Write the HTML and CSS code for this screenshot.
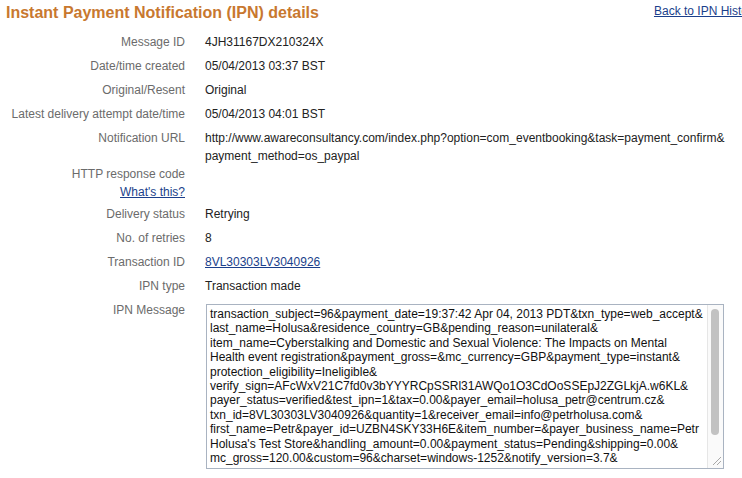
FILE: index.html
```html
<!DOCTYPE html>
<html lang="en">
<head>
    <meta charset="UTF-8">
    <title>Instant Payment Notification (IPN) details</title>
    <meta name="viewport" content="width=device-width, initial-scale=1.0">
    <link rel="stylesheet" href="styles.css">
</head>
<body>
    <div id="page">
        <header>
            <h1>Instant Payment Notification (IPN) details</h1>
            <a class="back" href="#">Back to IPN History</a>
        </header>
        <div id="details">
            <div class="label">Message ID</div>
            <div class="value">4JH31167DX210324X</div>

            <div class="label">Date/time created</div>
            <div class="value">05/04/2013 03:37 BST</div>

            <div class="label">Original/Resent</div>
            <div class="value">Original</div>

            <div class="label">Latest delivery attempt date/time</div>
            <div class="value">05/04/2013 04:01 BST</div>

            <div class="label url">Notification URL</div>
            <div class="value url">http://www.awareconsultancy.com/index.php?option=com_eventbooking&amp;task=payment_confirm&amp;<br>payment_method=os_paypal</div>

            <div class="label http">HTTP response code<br><a href="#">What's this?</a></div>
            <div class="value http"></div>

            <div class="label">Delivery status</div>
            <div class="value">Retrying</div>

            <div class="label">No. of retries</div>
            <div class="value">8</div>

            <div class="label">Transaction ID</div>
            <div class="value"><a href="#">8VL30303LV3040926</a></div>

            <div class="label">IPN type</div>
            <div class="value">Transaction made</div>

            <div class="label">IPN Message</div>
            <div class="value">
                <div class="msgbox">
<textarea id="message" readonly>transaction_subject=96&amp;payment_date=19:37:42 Apr 04, 2013 PDT&amp;txn_type=web_accept&amp;
last_name=Holusa&amp;residence_country=GB&amp;pending_reason=unilateral&amp;
item_name=Cyberstalking and Domestic and Sexual Violence: The Impacts on Mental
Health event registration&amp;payment_gross=&amp;mc_currency=GBP&amp;payment_type=instant&amp;
protection_eligibility=Ineligible&amp;
verify_sign=AFcWxV21C7fd0v3bYYYRCpSSRl31AWQo1O3CdOoSSEpJ2ZGLkjA.w6KL&amp;
payer_status=verified&amp;test_ipn=1&amp;tax=0.00&amp;payer_email=holusa_petr@centrum.cz&amp;
txn_id=8VL30303LV3040926&amp;quantity=1&amp;receiver_email=info@petrholusa.com&amp;
first_name=Petr&amp;payer_id=UZBN4SKY33H6E&amp;item_number=&amp;payer_business_name=Petr
Holusa's Test Store&amp;handling_amount=0.00&amp;payment_status=Pending&amp;shipping=0.00&amp;
mc_gross=120.00&amp;custom=96&amp;charset=windows-1252&amp;notify_version=3.7&amp;</textarea>
                    <div class="scrollbar">
                        <div class="thumb"></div>
                        <svg class="grip" width="10" height="10" viewBox="0 0 10 10">
                            <path d="M1 9L9 1M5 9L9 5" stroke="#a8a8a8" stroke-width="1" fill="none"/>
                        </svg>
                    </div>
                </div>
            </div>
        </div>
    </div>
</body>
</html>
```

FILE: styles.css
```css
* {
    margin: 0;
    padding: 0;
}
html {
    overflow: hidden;
}
body {
    font-family: "Liberation Sans", Arial, Helvetica, sans-serif;
    font-size: 12px;
    color: #222;
    background: #fff;
}
#page {
    width: 752px;
    padding: 0 6px;
}
header {
    display: flex;
    justify-content: space-between;
    align-items: flex-start;
    height: 30px;
}
h1 {
    font-size: 16px;
    font-weight: bold;
    color: #c8782f;
    line-height: 20px;
    margin-top: 3px;
}
a {
    color: #1b3f8b;
    text-decoration: underline;
}
.back {
    line-height: 18px;
    margin-top: 2px;
    white-space: nowrap;
}
#details {
    display: grid;
    grid-template-columns: 179px 1fr;
    column-gap: 20px;
    line-height: 18px;
}
.label,
.value {
    padding: 3px 0;
}
.label {
    text-align: right;
    color: #6b6b6b;
}
.url {
    padding-bottom: 0;
}
.http {
    padding-top: 0;
    padding-bottom: 1px;
}
.msgbox {
    display: flex;
    width: 518px;
    height: 165px;
    margin: 3px 0 0 1px;
    box-sizing: border-box;
    border: 1px solid #a9b3c1;
}
#message {
    flex: 1;
    display: block;
    padding: 2px 3px;
    border: none;
    outline: none;
    font-family: "Liberation Sans", Arial, Helvetica, sans-serif;
    font-size: 12px;
    line-height: 14.4px;
    color: #111;
    white-space: pre;
    overflow: hidden;
    resize: none;
}
.scrollbar {
    width: 12px;
    padding: 4px 0 2px 3px;
    border-left: 1px solid #e6e6e6;
    background: #fafafa;
    display: flex;
    flex-direction: column;
}
.thumb {
    width: 8px;
    height: 126px;
    border-radius: 4px;
    background: #c2c2c2;
}
.grip {
    display: block;
    margin-top: auto;
    margin-left: 1px;
}
```
